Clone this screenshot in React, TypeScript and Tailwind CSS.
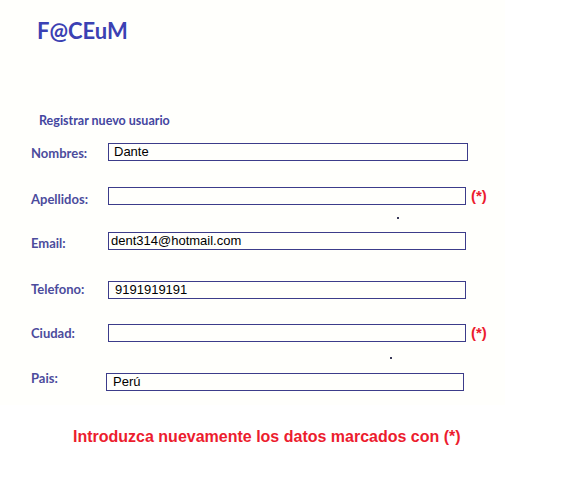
const fields = [
  { label: 'Nombres:', value: 'Dante', mt: 'mt-[14px]', w: 'w-[360px]', ml: 'ml-0', pad: 'pl-[5px]', lab: 'mt-[3px]' },
  { label: 'Apellidos:', value: '', mt: 'mt-[26px]', w: 'w-[358px]', ml: 'ml-0', pad: 'pl-[5px]', lab: 'mt-[5px]', req: true, dot: 'ml-[397px]', dotMt: 'mt-[12px]' },
  { label: 'Email:', value: 'dent314@hotmail.com', mt: 'mt-[13px]', w: 'w-[358px]', ml: 'ml-0', pad: 'pl-[2px]', lab: 'mt-[4px]' },
  { label: 'Telefono:', value: '9191919191', mt: 'mt-[31px]', w: 'w-[358px]', ml: 'ml-0', pad: 'pl-[6px]', lab: 'mt-[1px]' },
  { label: 'Ciudad:', value: '', mt: 'mt-[25px]', w: 'w-[358px]', ml: 'ml-0', pad: 'pl-[5px]', lab: 'mt-[2px]', req: true, dot: 'ml-[390px]', dotMt: 'mt-[15px]' },
  { label: 'Pais:', value: 'Perú', mt: 'mt-[14px]', w: 'w-[358px]', ml: '-ml-[2px]', pad: 'pl-[6px]', lab: '-mt-[2px]' },
];

export default function App() {
  return (
    <div className="w-[563px] h-[501px] bg-white font-['Lato',sans-serif]">
      <div className="w-[505px] h-[405px] bg-[#fffffc] pt-[16px]">
        <h1 className="ml-[37px] text-[22px] leading-[30px] font-bold text-[#3b41b3]">F@CEuM</h1>

        <p className="ml-[39px] mt-[67px] text-[12.5px] leading-[16px] font-bold text-[#4446a0]">
          Registrar nuevo usuario
        </p>

        <div className="flex flex-col">
          {fields.map((f) => (
            <div key={f.label} className={f.mt}>
              <div className="flex items-start h-[18px]">
                <div
                  className={`w-[77px] ml-[31px] text-[13px] leading-[14px] font-bold text-[#4c4c9c] ${f.lab}`}
                >
                  {f.label}
                </div>
                <div
                  className={`${f.w} ${f.ml} ${f.pad} h-[18px] border border-[#3c3c8a] bg-[#fffffc] text-[13px] leading-[16px] text-black font-['Liberation_Sans',Arial,sans-serif]`}
                >
                  {f.value}
                </div>
                {f.req && (
                  <span className="ml-[5px] text-[15px] leading-[17px] font-bold text-[#ec1c2e] font-['Liberation_Sans',Arial,sans-serif]">
                    (*)
                  </span>
                )}
              </div>
              {f.dot && (
                <div className={`flex ${f.dotMt}`}>
                  <div className={`${f.dot} w-[2px] h-[2px] bg-[#3a3a5a]`} />
                </div>
              )}
            </div>
          ))}
        </div>
      </div>

      <p className="ml-[73px] mt-[22px] text-[16px] leading-[20px] font-bold text-[#ec1c2e] font-['Liberation_Sans',Arial,sans-serif]">
        Introduzca nuevamente los datos marcados con (*)
      </p>
    </div>
  );
}
